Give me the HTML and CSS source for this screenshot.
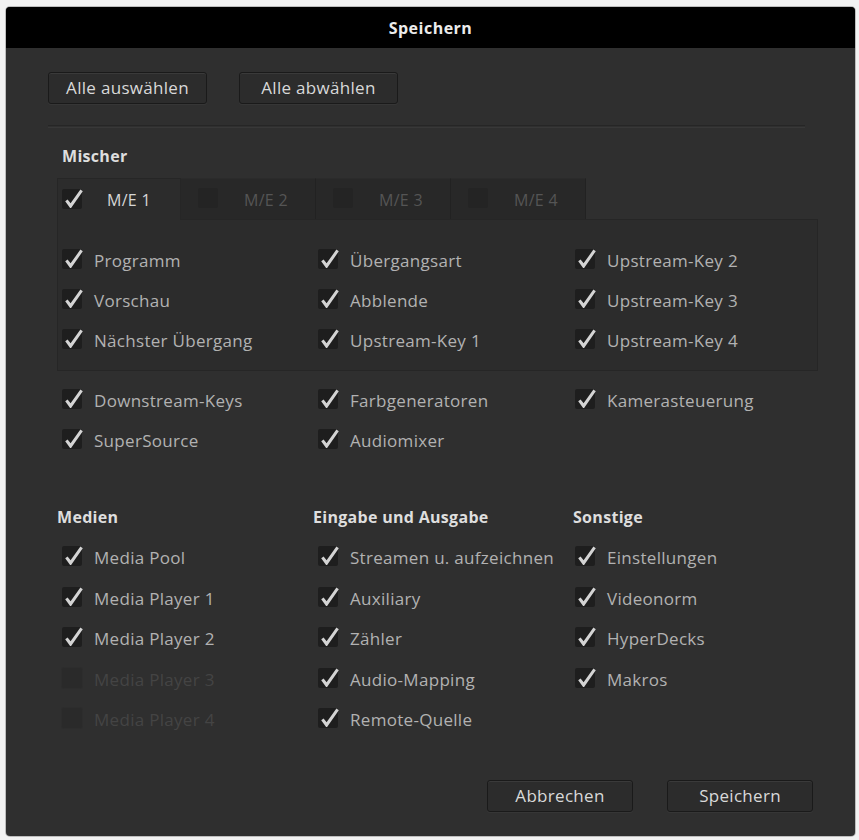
FILE: index.html
```html
<!DOCTYPE html>
<html lang="de">
<head>
<meta charset="utf-8">
<title>Speichern</title>
<link rel="stylesheet" href="styles.css">
</head>
<body>
<svg class="defs" width="0" height="0" aria-hidden="true">
  <symbol id="chk" viewBox="0 0 20 20">
    <path d="M2.2 12.2 L4.6 10.4 L7.6 14.3 L17.4 0.6 L19.8 2.3 L8.1 18.9 L7.1 18.9 Z"/>
  </symbol>
</svg>
<div class="dialog">
  <div class="titlebar">Speichern</div>
  <div class="content">
    <div class="top-buttons">
      <button class="btn btn-wide">Alle auswählen</button>
      <button class="btn btn-wide">Alle abwählen</button>
    </div>
    <div class="separator"></div>

    <div class="heading mixer-heading">Mischer</div>
    <div class="tabs">
      <div class="tab active"><span class="cb"><svg><use href="#chk"/></svg></span><span class="tab-label">M/E 1</span></div>
      <div class="tab"><span class="cb off"></span><span class="tab-label">M/E 2</span></div>
      <div class="tab"><span class="cb off"></span><span class="tab-label">M/E 3</span></div>
      <div class="tab"><span class="cb off"></span><span class="tab-label">M/E 4</span></div>
    </div>
    <div class="panel">
      <div class="grid3">
        <div class="item"><span class="cb"><svg><use href="#chk"/></svg></span><span>Programm</span></div>
        <div class="item"><span class="cb"><svg><use href="#chk"/></svg></span><span>Übergangsart</span></div>
        <div class="item"><span class="cb"><svg><use href="#chk"/></svg></span><span>Upstream-Key 2</span></div>
        <div class="item"><span class="cb"><svg><use href="#chk"/></svg></span><span>Vorschau</span></div>
        <div class="item"><span class="cb"><svg><use href="#chk"/></svg></span><span>Abblende</span></div>
        <div class="item"><span class="cb"><svg><use href="#chk"/></svg></span><span>Upstream-Key 3</span></div>
        <div class="item"><span class="cb"><svg><use href="#chk"/></svg></span><span>Nächster Übergang</span></div>
        <div class="item"><span class="cb"><svg><use href="#chk"/></svg></span><span>Upstream-Key 1</span></div>
        <div class="item"><span class="cb"><svg><use href="#chk"/></svg></span><span>Upstream-Key 4</span></div>
      </div>
    </div>
    <div class="grid3 extra">
      <div class="item"><span class="cb"><svg><use href="#chk"/></svg></span><span>Downstream-Keys</span></div>
      <div class="item"><span class="cb"><svg><use href="#chk"/></svg></span><span>Farbgeneratoren</span></div>
      <div class="item"><span class="cb"><svg><use href="#chk"/></svg></span><span>Kamerasteuerung</span></div>
      <div class="item"><span class="cb"><svg><use href="#chk"/></svg></span><span>SuperSource</span></div>
      <div class="item"><span class="cb"><svg><use href="#chk"/></svg></span><span>Audiomixer</span></div>
    </div>

    <div class="sections">
      <div class="section">
        <div class="heading">Medien</div>
        <div class="item"><span class="cb"><svg><use href="#chk"/></svg></span><span>Media Pool</span></div>
        <div class="item"><span class="cb"><svg><use href="#chk"/></svg></span><span>Media Player 1</span></div>
        <div class="item"><span class="cb"><svg><use href="#chk"/></svg></span><span>Media Player 2</span></div>
        <div class="item disabled"><span class="cb off"></span><span>Media Player 3</span></div>
        <div class="item disabled"><span class="cb off"></span><span>Media Player 4</span></div>
      </div>
      <div class="section">
        <div class="heading">Eingabe und Ausgabe</div>
        <div class="item"><span class="cb"><svg><use href="#chk"/></svg></span><span>Streamen u. aufzeichnen</span></div>
        <div class="item"><span class="cb"><svg><use href="#chk"/></svg></span><span>Auxiliary</span></div>
        <div class="item"><span class="cb"><svg><use href="#chk"/></svg></span><span>Zähler</span></div>
        <div class="item"><span class="cb"><svg><use href="#chk"/></svg></span><span>Audio-Mapping</span></div>
        <div class="item"><span class="cb"><svg><use href="#chk"/></svg></span><span>Remote-Quelle</span></div>
      </div>
      <div class="section third">
        <div class="heading">Sonstige</div>
        <div class="item"><span class="cb"><svg><use href="#chk"/></svg></span><span>Einstellungen</span></div>
        <div class="item"><span class="cb"><svg><use href="#chk"/></svg></span><span>Videonorm</span></div>
        <div class="item"><span class="cb"><svg><use href="#chk"/></svg></span><span>HyperDecks</span></div>
        <div class="item"><span class="cb"><svg><use href="#chk"/></svg></span><span>Makros</span></div>
      </div>
    </div>
  </div>
  <div class="bottom-buttons">
    <button class="btn btn-narrow">Abbrechen</button>
    <button class="btn btn-narrow">Speichern</button>
  </div>
</div>
</body>
</html>
```
FILE: styles.css
```css
* { box-sizing: border-box; }

html, body {
  margin: 0;
  background: #f2f2f2;
}

body {
  padding: 7px 4px 4px 6px;
  font-family: "Open Sans", "DejaVu Sans", sans-serif;
  font-size: 17px;
  letter-spacing: 0.3px;
  color: #b2b2b2;
}

.defs {
  position: absolute;
  width: 0;
  height: 0;
}

.dialog {
  width: 849px;
  height: 829px;
  background: #2f2f2f;
  border-radius: 4px;
  overflow: hidden;
  display: flex;
  flex-direction: column;
  box-shadow: 0 0 0 1px #bdbdbd;
}

.titlebar {
  height: 41px;
  background: #000;
  color: #ececec;
  font-weight: 700;
  font-size: 16px;
  letter-spacing: 0.5px;
  display: flex;
  align-items: center;
  justify-content: center;
  flex-shrink: 0;
}

.content {
  padding: 24px 0 0 42px;
}

.top-buttons {
  display: flex;
  gap: 32px;
}

.btn {
  height: 32px;
  background: #2c2c2c;
  border: 1px solid #1a1a1a;
  border-radius: 3px;
  box-shadow: inset 0 1px 0 #3a3a3a, 0 1px 0 #363636;
  color: #d9d9d9;
  font-family: "Open Sans", "DejaVu Sans", sans-serif;
  font-size: 17px;
  letter-spacing: 0.3px;
  padding: 0;
  line-height: 28px;
}

.btn-wide { width: 159px; }
.btn-narrow { width: 146px; }

.separator {
  margin-top: 21px;
  width: 757px;
  height: 3px;
  border-top: 1px solid #262626;
  border-bottom: 1px solid #383838;
}

.heading {
  font-weight: 700;
  color: #dedede;
  font-size: 16px;
  letter-spacing: 0.3px;
  line-height: 20px;
}

.mixer-heading {
  margin: 18px 0 0 14px;
}

.tabs {
  display: flex;
  margin: 12px 0 0 9px;
  height: 41px;
}

.tab {
  display: flex;
  align-items: center;
  width: 135px;
  height: 41px;
  background: #282828;
  border-right: 1px solid #222;
  border-top: 1px solid #2b2b2b;
  padding-left: 17px;
  gap: 26px;
  color: #555;
  font-size: 16px;
}

.tab.active {
  width: 124px;
  background: #2c2c2c;
  border: 1px solid #262626;
  border-bottom: none;
  padding-left: 4px;
  gap: 25px;
  color: #d6d6d6;
  position: relative;
  z-index: 1;
  height: 42px;
}

.tab-label {
  line-height: 20px;
  padding-top: 1px;
}

.panel {
  margin-left: 9px;
  width: 761px;
  height: 152px;
  background: #2c2c2c;
  border: 1px solid #262626;
  padding: 21px 0 0 4px;
}

.grid3 {
  display: grid;
  grid-template-columns: 256px 257px auto;
}

.item {
  display: flex;
  align-items: center;
  gap: 12px;
  height: 40px;
  line-height: 20px;
  white-space: nowrap;
}

.cb {
  position: relative;
  width: 20px;
  height: 20px;
  flex-shrink: 0;
  background: #1e1e1e;
  border-radius: 2px;
  margin-top: -4px;
}

.cb svg {
  position: absolute;
  left: 1px;
  top: 0;
  width: 20px;
  height: 20px;
  fill: #d4d4d4;
  overflow: visible;
}

.cb.off {
  background: #242424;
}

.tab .cb { margin-top: -2px; }

.extra {
  margin: 10px 0 0 14px;
}

.sections {
  display: grid;
  grid-template-columns: 256px 257px auto;
  margin: 46px 0 0 9px;
}

.section .heading {
  margin-bottom: 11px;
}

.section .item {
  padding-left: 5px;
  height: 40.5px;
}

.section.third .heading { margin-left: 3px; }

.item.disabled {
  color: #444;
}

.item.disabled .cb {
  background: #2a2a2a;
  box-shadow: 0 0 0 1px #2d2d2d;
}

.bottom-buttons {
  margin-top: auto;
  display: flex;
  justify-content: flex-end;
  gap: 34px;
  padding: 0 42px 24px 0;
}
```
